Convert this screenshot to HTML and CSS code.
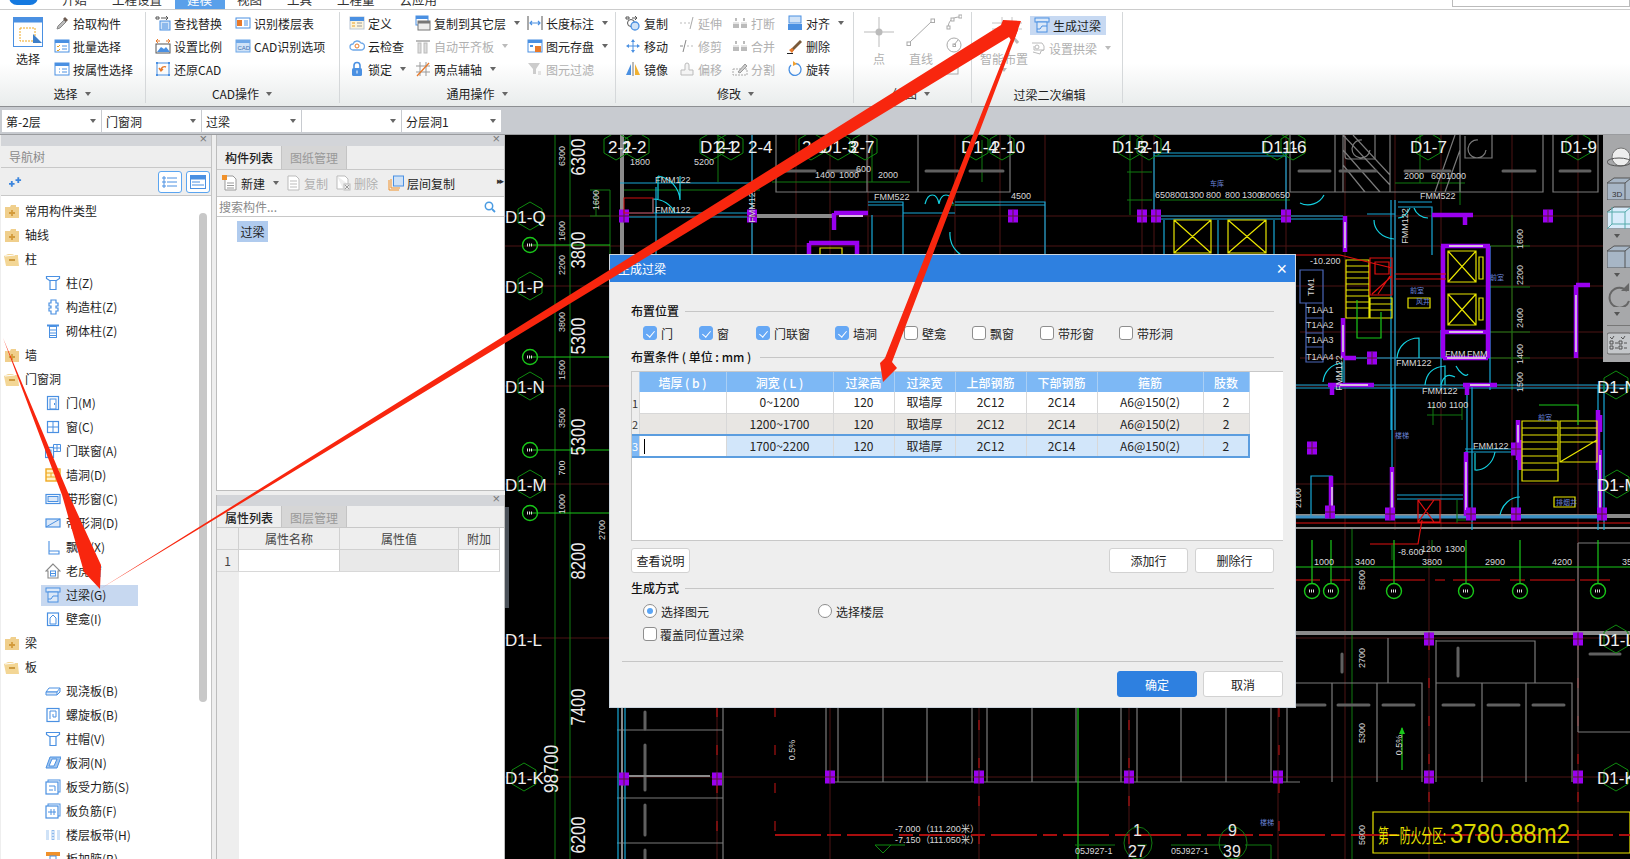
FILE: index.html
```html
<!DOCTYPE html>
<html lang="zh-CN">
<head>
<meta charset="utf-8">
<title>生成过梁</title>
<link rel="stylesheet" href="styles.css">
</head>
<body>
<svg class="sprite" aria-hidden="true">
  <defs>
    <g id="s-pick"><path d="M3 14l1-3 6-6 2 2-6 6z" fill="#bbb" stroke="#888"/><path d="M9 4l2-2 3 3-2 2z" fill="#6b5a50"/></g>
    <g id="s-batch"><rect x="1" y="2" width="14" height="12" fill="#fff" stroke="#4a90e2"/><rect x="1" y="2" width="14" height="3" fill="#4a90e2"/><path d="M3 8l1 1 2-2M3 12l1 1 2-2" stroke="#e8a020" fill="none"/><path d="M8 8h5M8 11h5" stroke="#4a90e2"/></g>
    <g id="s-attr"><rect x="1" y="2" width="14" height="12" fill="#fff" stroke="#4a90e2"/><rect x="1" y="2" width="14" height="3" fill="#4a90e2"/><path d="M8 8h5M8 11h5M5 8h1M5 11h1" stroke="#4a90e2"/></g>
    <g id="s-find"><path d="M1 2h3v2H1zM6 3h7l-2-2m2 2l-2 2" fill="none" stroke="#555"/><rect x="5" y="6" width="10" height="9" fill="#cfe2f7" stroke="#4a90e2"/><path d="M7 9h6M7 11h6M7 13h6" stroke="#4a90e2"/></g>
    <g id="s-floor"><rect x="1" y="3" width="14" height="10" fill="#fff" stroke="#4a90e2"/><rect x="2" y="5" width="5" height="6" fill="#e8792a"/><path d="M9 6h4M9 8h4M9 10h4" stroke="#4a90e2"/></g>
    <g id="s-scale"><path d="M1 3h4M11 3h4M3 1l-2 2 2 2M13 1l2 2-2 2" stroke="#e8792a" fill="none"/><rect x="1" y="6" width="14" height="9" fill="#fff" stroke="#555"/><path d="M2 14l4-5 3 2 2-2 4 5z" fill="#4a90e2"/></g>
    <g id="s-cadopt"><rect x="1" y="2" width="14" height="12" fill="#cfe2f7" stroke="#6fa8e8"/><rect x="1" y="2" width="14" height="3" fill="#6fa8e8"/></g>
    <g id="s-restore"><rect x="2" y="2" width="12" height="12" fill="none" stroke="#4a90e2"/><path d="M1 1h2v2H1zM13 1h2v2h-2zM1 13h2v2H1zM13 13h2v2h-2z" fill="#4a90e2"/><path d="M11 6a3.5 3.5 0 0 0-5 3M4 7l2 3 2-2" fill="none" stroke="#e8792a" stroke-width="1.4"/></g>
    <g id="s-def"><rect x="1" y="2" width="14" height="12" fill="#fbf3dc" stroke="#b9c6d6"/><rect x="1" y="2" width="14" height="4" fill="#4a90e2"/><path d="M3 8h3M3 11h3" stroke="#e8a020"/><path d="M8 8h5M8 11h5" stroke="#999"/></g>
    <g id="s-cloud"><path d="M4 12a3 3 0 0 1 0-6 4.500 4.500 0 0 1 8-1 3.500 3.500 0 0 1 0 7z" fill="#fff" stroke="#6fa8e8" stroke-width="1.3"/><circle cx="8" cy="8" r="2" fill="none" stroke="#e8792a"/></g>
    <g id="s-lock"><rect x="3" y="7" width="10" height="8" rx="1.500" fill="#4a90e2"/><path d="M5 7V4.500a3 3 0 0 1 6 0V7" fill="none" stroke="#4a90e2" stroke-width="1.6"/><rect x="7.500" y="9.500" width="1" height="3" fill="#fff"/></g>
    <g id="s-copyl"><rect x="1" y="1" width="12" height="9" fill="#fff" stroke="#4a90e2"/><rect x="1" y="1" width="12" height="3" fill="#4a90e2"/><rect x="3" y="6" width="12" height="9" fill="#eee" stroke="#777"/><rect x="3" y="6" width="12" height="2.500" fill="#777"/></g>
    <g id="s-flat"><path d="M1 3h14" stroke="#bbb" stroke-width="2"/><rect x="3" y="5" width="3" height="10" fill="#ddd" stroke="#bbb"/><rect x="9" y="5" width="3" height="10" fill="#ddd" stroke="#bbb"/></g>
    <g id="s-axis"><path d="M1 5h14M1 11h14M5 1v14M11 1v14" stroke="#999"/><path d="M2 15L14 2" stroke="#e8792a" stroke-width="1.3"/></g>
    <g id="s-len"><path d="M1 1v14M15 1v14" stroke="#555"/><path d="M3 8h10M5 6L3 8l2 2M11 6l2 2-2 2" stroke="#4a90e2" fill="none" stroke-width="1.2"/></g>
    <g id="s-save"><rect x="1" y="2" width="14" height="12" fill="#fff" stroke="#4a90e2"/><rect x="1" y="2" width="14" height="3" fill="#4a90e2"/><rect x="8" y="8" width="6" height="6" fill="#e8792a"/><rect x="3" y="7" width="3" height="2" fill="#4a90e2"/></g>
    <g id="s-filter"><path d="M1 2h12L9 8v5H6V8z" fill="#ccc"/><path d="M11 11h3M11 13h3" stroke="#ccc"/></g>
    <g id="s-copy"><path d="M1 2h3v2H1z" fill="none" stroke="#555"/><path d="M7 3h5l-2-2m2 2l-2 2" fill="none" stroke="#555"/><circle cx="6" cy="8" r="3.500" fill="none" stroke="#555"/><circle cx="10" cy="11" r="4" fill="#cfe2f7" stroke="#4a90e2" stroke-width="1.300"/></g>
    <g id="s-extend"><path d="M1 8h2M5 8h2M9 8h2" stroke="#bbb"/><path d="M11 14l3-12" stroke="#aaa"/></g>
    <g id="s-break"><path d="M1 8h6M9 8h6" stroke="#ccc"/><rect x="1" y="9" width="6" height="4" fill="#bbb"/><rect x="9" y="9" width="6" height="4" fill="#bbb"/><path d="M4 3v3M12 3v3" stroke="#bbb" stroke-width="2"/></g>
    <g id="s-alignr"><rect x="2" y="1" width="12" height="7" fill="#cfe2f7" stroke="#4a90e2"/><rect x="1" y="9" width="14" height="6" fill="#4a90e2"/></g>
    <g id="s-move"><path d="M8 3v10M3 8h10" stroke="#4a90e2"/><path d="M8 1l2 3H6zM8 15l2-3H6zM1 8l3-2v4zM15 8l-3-2v4z" fill="#4a90e2"/></g>
    <g id="s-trim"><path d="M4 14l3-12" stroke="#888"/><path d="M1 8h3" stroke="#888"/><path d="M8 8h7" stroke="#bbb" stroke-dasharray="2 2"/></g>
    <g id="s-del"><path d="M4 11L13 2l2 2-9 9z" fill="#7a5a3a"/><path d="M2 12l3-2 2 2-2 3z" fill="#e8792a"/><path d="M0 15.500h6" stroke="#222"/></g>
    <g id="s-mirror"><path d="M8 1v14" stroke="#777"/><path d="M6 3v11H1z" fill="#4a90e2"/><path d="M10 3v11h5z" fill="#f0b030"/></g>
    <g id="s-offset"><path d="M6 9V4a2 2 0 0 1 4 0v5h4v5H2V9z" fill="#f4f4f4" stroke="#bbb"/></g>
    <g id="s-split"><rect x="1" y="8" width="14" height="6" fill="none" stroke="#aaa" stroke-dasharray="2 1"/><path d="M6 11l7-8 2 2-7 7z" fill="#ccc" stroke="#999"/></g>
    <g id="s-rotate"><path d="M4 4a6 6 0 1 0 5-1.500" fill="none" stroke="#4a90e2" stroke-width="1.300"/><path d="M6 0v5l4-2z" fill="#f0a030"/></g>
    <g id="s-lintel"><rect x="1" y="1" width="14" height="4" fill="#dbe8f8" stroke="#4a90e2"/><rect x="3" y="5" width="10" height="10" fill="#dbe8f8" stroke="#4a90e2"/><path d="M3 12h3l2-3h5" fill="none" stroke="#4a90e2"/></g>
    <g id="s-vault"><path d="M3 12l7 2 1-3 3-1" stroke="#bbb" fill="none"/><path d="M2 3h10l2 3v4H4V6" fill="none" stroke="#bbb"/><circle cx="7" cy="7" r="2" fill="none" stroke="#bbb"/></g>
    <g id="s-col"><path d="M1.500 1.500h13v2l-3 2h-7l-3-2zM5 5.500h6v9H5z" fill="#fff" stroke="#4a90e2" stroke-width="1.200"/></g>
    <g id="s-cons"><path d="M6 1h5v3h2v3h-2v2h2v3h-2v3H6v-3H4V9h2V7H4V4h2z" fill="#fff" stroke="#4a90e2" stroke-width="1.200"/></g>
    <g id="s-mas"><path d="M2 1.500h12v2H2z" fill="#4a90e2"/><rect x="4.500" y="3.500" width="7" height="11" fill="#fff" stroke="#4a90e2"/><path d="M4.500 7h7M4.500 10h7M4.500 12.500h7" stroke="#4a90e2"/></g>
    <g id="s-door"><rect x="2.500" y="1.500" width="11" height="13" fill="#fff" stroke="#4a90e2" stroke-width="1.200"/><rect x="5" y="4" width="6" height="10" fill="none" stroke="#4a90e2"/><rect x="9" y="8" width="1" height="2" fill="#4a90e2"/></g>
    <g id="s-win"><rect x="2.500" y="2.500" width="11" height="11" fill="#fff" stroke="#4a90e2" stroke-width="1.200"/><path d="M8 2.500v11M2.500 8h11" stroke="#4a90e2"/></g>
    <g id="s-dw"><rect x="0.500" y="4.500" width="8" height="10" fill="#fff" stroke="#4a90e2" stroke-width="1.200"/><rect x="3" y="7" width="3" height="7" fill="none" stroke="#4a90e2"/><path d="M8.500 1.500h7v7h-7zM12 1.500v7M8.500 5h7" fill="none" stroke="#4a90e2"/></g>
    <g id="s-hole"><rect x="1" y="2" width="14" height="12" fill="#fff3c8" stroke="#f0a820" stroke-width="1.400"/><path d="M1 6h14M1 10h10M6 6v4M11 6v8" stroke="#f0a820"/></g>
    <g id="s-band"><rect x="1" y="3.500" width="14" height="9" fill="#fff" stroke="#4a90e2" stroke-width="1.200"/><rect x="3" y="5.500" width="10" height="5" fill="#dbe8f8" stroke="#4a90e2"/></g>
    <g id="s-bandh"><rect x="1" y="4" width="14" height="8" fill="#dbe8f8" stroke="#4a90e2" stroke-width="1.200"/><path d="M1 12L15 4" stroke="#4a90e2"/></g>
    <g id="s-bay"><path d="M4 2v10h10M4 12h10v3H4z" fill="#fff" stroke="#4a90e2" stroke-width="1.100"/></g>
    <g id="s-dormer"><path d="M8 1L1 8h2v7h10V8h2z" fill="#fff" stroke="#888" stroke-width="1.100"/><rect x="5.500" y="8" width="5" height="5" fill="#fff" stroke="#4a90e2"/><path d="M5.500 10.500h5" stroke="#4a90e2"/></g>
    <g id="s-niche"><rect x="2.500" y="2" width="11" height="12.500" fill="#fff" stroke="#4a90e2" stroke-width="1.200"/><path d="M5 13V7l3-3 3 3v6z" fill="none" stroke="#4a90e2"/></g>
    <g id="s-slab"><path d="M4 5h11l-3 4H1z" fill="#fff" stroke="#4a90e2"/><path d="M1 9h11v3H1zM12 12l3-3V5" fill="#dbe8f8" stroke="#4a90e2"/></g>
    <g id="s-spiral"><rect x="2" y="1.500" width="12" height="13" fill="#fff" stroke="#4a90e2" stroke-width="1.200"/><path d="M5 12V4h6v6H8V7" fill="none" stroke="#4a90e2"/></g>
    <g id="s-shole"><path d="M5 2h11l-4 11H1z" fill="#9fc4ee" stroke="#4a90e2"/><path d="M7 4h5l-3 7H4z" fill="#fff" stroke="#4a90e2"/></g>
    <g id="s-bar"><rect x="3" y="1" width="12" height="12" fill="#fff" stroke="#4a90e2"/><rect x="1" y="3" width="12" height="12" fill="#fff" stroke="#4a90e2" stroke-width="1.200"/><path d="M4 7h6v5M4 11h4" fill="none" stroke="#4a90e2"/></g>
    <g id="s-neg"><rect x="3" y="1" width="12" height="12" fill="#fff" stroke="#4a90e2"/><rect x="1" y="3" width="12" height="12" fill="#fff" stroke="#4a90e2" stroke-width="1.200"/><path d="M3 9h8M6 6v6M9 6v6" fill="none" stroke="#4a90e2"/></g>
    <g id="s-strip"><rect x="1" y="3" width="14" height="10" fill="#cfe2f7"/><path d="M5 3v10M11 3v10" stroke="#fff" stroke-width="2"/><path d="M8 3v10" stroke="#4a90e2" stroke-dasharray="1 2"/></g>
    <g id="s-haunch"><path d="M1 1h14v4H1z" fill="#f0912a"/><rect x="5" y="5" width="6" height="10" fill="#fff" stroke="#4a90e2"/></g>
    <g id="f-plus"><path d="M1 4h5l1-2h5v2h3v11H1z" fill="#f0cf8c"/><path d="M5 10h6M8 7v6" stroke="#d39b3c" stroke-width="1.800"/></g>
    <g id="f-minus"><path d="M0 5l4-2h6l-1 1h5v2l1 9H2z" fill="#f3d695"/><path d="M1 5l10-1" stroke="#fff"/><path d="M5 9h6" stroke="#c99336" stroke-width="1.800"/></g>
    <g id="ps"><rect x="-5" y="-6.500" width="10" height="13" fill="#9a00f0"/><path d="M-5 0H5M0-6.500V6.500" stroke="#5a1a30"/></g>
    <path id="hex" d="M0-14L12-7V7L0 14-12 7V-7z" fill="none" stroke="#0f8a0f"/>
    <g id="axc"><circle r="7.500" fill="none" stroke="#19c719" stroke-width="1.400"/><path d="M-3 0h6" stroke="#ddd" stroke-width="3" stroke-dasharray="1 1"/></g>
  </defs>
</svg>

<div class="app">
  <header class="tabs">
    <div class="logo"></div>
    <div class="tab">开始</div>
    <div class="tab">工程设置</div>
    <div class="tab active">建模</div>
    <div class="tab">视图</div>
    <div class="tab">工具</div>
    <div class="tab">工程量</div>
    <div class="tab">云应用</div>
    <div class="quick"></div>
  </header>

  <section class="ribbon">
    <div class="group g1">
      <div class="cols">
        <div class="big bigsel">
          <svg class="i-big" viewBox="0 0 30 30"><rect x=".5" y=".5" width="29" height="29" fill="#fff" stroke="#4a90e2"/><rect x=".5" y=".5" width="29" height="5" fill="#4a90e2"/><rect x="7" y="11" width="15" height="13" fill="none" stroke="#f0a820" stroke-dasharray="2 1"/><path d="M20 17l9 9H20z" fill="#3f7fc8"/></svg>
          <span>选择</span>
        </div>
        <div class="col c-g1">
          <div class="it"><svg class="i"><use href="#s-pick"/></svg>拾取构件</div>
          <div class="it"><svg class="i"><use href="#s-batch"/></svg>批量选择</div>
          <div class="it"><svg class="i"><use href="#s-attr"/></svg>按属性选择</div>
        </div>
      </div>
      <div class="glabel lb1">选择<i class="caret"></i></div>
    </div>

    <div class="group g2">
      <div class="cols">
        <div class="col w80">
          <div class="it"><svg class="i"><use href="#s-find"/></svg>查找替换</div>
          <div class="it"><svg class="i"><use href="#s-scale"/></svg>设置比例</div>
          <div class="it"><svg class="i"><use href="#s-restore"/></svg>还原CAD</div>
        </div>
        <div class="col">
          <div class="it"><svg class="i"><use href="#s-floor"/></svg>识别楼层表</div>
          <div class="it"><svg class="i" viewBox="0 0 16 16"><use href="#s-cadopt"/><text x="2.500" y="12" class="cadt">CAD</text></svg>CAD识别选项</div>
        </div>
      </div>
      <div class="glabel">CAD操作<i class="caret"></i></div>
    </div>

    <div class="group g3">
      <div class="cols">
        <div class="col w66">
          <div class="it"><svg class="i"><use href="#s-def"/></svg>定义</div>
          <div class="it"><svg class="i"><use href="#s-cloud"/></svg>云检查</div>
          <div class="it"><svg class="i"><use href="#s-lock"/></svg>锁定<i class="caret"></i></div>
        </div>
        <div class="col w112">
          <div class="it"><svg class="i"><use href="#s-copyl"/></svg>复制到其它层<i class="caret"></i></div>
          <div class="it off"><svg class="i"><use href="#s-flat"/></svg>自动平齐板<i class="caret"></i></div>
          <div class="it"><svg class="i"><use href="#s-axis"/></svg>两点辅轴<i class="caret"></i></div>
        </div>
        <div class="col">
          <div class="it"><svg class="i"><use href="#s-len"/></svg>长度标注<i class="caret"></i></div>
          <div class="it"><svg class="i"><use href="#s-save"/></svg>图元存盘<i class="caret"></i></div>
          <div class="it off"><svg class="i"><use href="#s-filter"/></svg>图元过滤</div>
        </div>
      </div>
      <div class="glabel">通用操作<i class="caret"></i></div>
    </div>

    <div class="group g4">
      <div class="cols">
        <div class="col w54">
          <div class="it"><svg class="i"><use href="#s-copy"/></svg>复制</div>
          <div class="it"><svg class="i"><use href="#s-move"/></svg>移动</div>
          <div class="it"><svg class="i"><use href="#s-mirror"/></svg>镜像</div>
        </div>
        <div class="col w53">
          <div class="it off"><svg class="i"><use href="#s-extend"/></svg>延伸</div>
          <div class="it off"><svg class="i"><use href="#s-trim"/></svg>修剪</div>
          <div class="it off"><svg class="i"><use href="#s-offset"/></svg>偏移</div>
        </div>
        <div class="col w55">
          <div class="it off"><svg class="i"><use href="#s-break"/></svg>打断</div>
          <div class="it off"><svg class="i"><use href="#s-break"/></svg>合并</div>
          <div class="it off"><svg class="i"><use href="#s-split"/></svg>分割</div>
        </div>
        <div class="col">
          <div class="it"><svg class="i"><use href="#s-alignr"/></svg>对齐<i class="caret"></i></div>
          <div class="it"><svg class="i"><use href="#s-del"/></svg>删除</div>
          <div class="it"><svg class="i"><use href="#s-rotate"/></svg>旋转</div>
        </div>
      </div>
      <div class="glabel">修改<i class="caret"></i></div>
    </div>

    <div class="group g5">
      <div class="cols">
        <div class="big off w42">
          <svg class="i-big" viewBox="0 0 30 30"><path d="M15 0v30M0 15h30" stroke="#bbb"/><circle cx="15" cy="15" r="3.500" fill="#bbb"/></svg>
          <span>点</span>
        </div>
        <div class="big off w40">
          <svg class="i-big" viewBox="0 0 30 30"><rect x="1" y="25" width="3.500" height="3.500" fill="none" stroke="#aaa"/><rect x="25" y="2" width="3.500" height="3.500" fill="none" stroke="#aaa"/><path d="M4 25L25 5" stroke="#aaa"/></svg>
          <span>直线</span>
        </div>
        <div class="mini">
          <svg class="i" viewBox="0 0 16 16"><path d="M2 15c0-8 4-12 12-12" fill="none" stroke="#aaa"/><rect x="1" y="12" width="3" height="3" fill="#fff" stroke="#aaa"/><rect x="5" y="4" width="3" height="3" fill="#fff" stroke="#aaa"/><rect x="13" y="1" width="3" height="3" fill="#fff" stroke="#aaa"/></svg>
          <svg class="i" viewBox="0 0 16 16"><circle cx="8" cy="8" r="7" fill="none" stroke="#aaa"/><rect x="7" y="7" width="2.500" height="2.500" fill="none" stroke="#aaa"/><path d="M8 8l4-5" stroke="#aaa"/></svg>
          <svg class="i" viewBox="0 0 16 16"><rect x="1" y="5" width="11" height="9" fill="none" stroke="#aaa"/><rect x="10" y="1" width="4" height="4" fill="#fff" stroke="#aaa"/></svg>
        </div>
      </div>
      <div class="glabel">绘图<i class="caret"></i></div>
    </div>

    <div class="group g6">
      <div class="cols">
        <div class="big off w52">
          <svg class="i-big" viewBox="0 0 30 30"><path d="M0 12h30M0 6h30M10 0v22M20 0v22" stroke="#c4c4c4"/><path d="M14 12l12 14" stroke="#bbb" stroke-width="3"/></svg>
          <span>智能布置</span>
          <i class="caret"></i>
        </div>
        <div class="col">
          <div class="it hi"><svg class="i"><use href="#s-lintel"/></svg>生成过梁</div>
          <div class="it off"><svg class="i"><use href="#s-vault"/></svg>设置拱梁<i class="caret"></i></div>
        </div>
      </div>
      <div class="glabel nocaret">过梁二次编辑</div>
    </div>
  </section>

  <section class="combos">
    <div class="combo">第-2层<i class="caret"></i></div>
    <div class="combo">门窗洞<i class="caret"></i></div>
    <div class="combo">过梁<i class="caret"></i></div>
    <div class="combo"><i class="caret"></i></div>
    <div class="combo">分层洞1<i class="caret"></i></div>
  </section>

  <main class="work">
    <aside class="nav">
      <div class="strip"><span class="x">×</span></div>
      <div class="navtitle">导航树</div>
      <div class="navtools">
        <svg class="pin" viewBox="0 0 14 10"><path d="M0 7h6M3 4v6" stroke="#3d86dd" stroke-width="2"/><path d="M7 3h6M10 0v6" stroke="#3d86dd" stroke-width="2"/></svg>
        <span class="tbtn"><svg viewBox="0 0 16 14"><path d="M1 2h2v2H1zM1 6h2v2H1zM1 10h2v2H1z" fill="none" stroke="#4a90e2"/><path d="M5 3h10M5 7h10M5 11h10" stroke="#4a90e2"/></svg></span>
        <span class="tbtn"><svg viewBox="0 0 16 14"><rect x=".5" y=".5" width="15" height="13" fill="#fff" stroke="#4a90e2"/><rect x=".5" y=".5" width="15" height="4" fill="#4a90e2"/><path d="M2 7h8M2 10h12" stroke="#4a90e2"/></svg></span>
      </div>
      <div class="tree">
        <div class="thumb"></div>
        <div class="n"><svg class="i"><use href="#f-plus"/></svg>常用构件类型</div>
        <div class="n"><svg class="i"><use href="#f-plus"/></svg>轴线</div>
        <div class="n"><svg class="i"><use href="#f-minus"/></svg>柱</div>
        <div class="n s"><svg class="i"><use href="#s-col"/></svg>柱(Z)</div>
        <div class="n s"><svg class="i"><use href="#s-cons"/></svg>构造柱(Z)</div>
        <div class="n s"><svg class="i"><use href="#s-mas"/></svg>砌体柱(Z)</div>
        <div class="n"><svg class="i"><use href="#f-plus"/></svg>墙</div>
        <div class="n"><svg class="i"><use href="#f-minus"/></svg>门窗洞</div>
        <div class="n s"><svg class="i"><use href="#s-door"/></svg>门(M)</div>
        <div class="n s"><svg class="i"><use href="#s-win"/></svg>窗(C)</div>
        <div class="n s"><svg class="i"><use href="#s-dw"/></svg>门联窗(A)</div>
        <div class="n s"><svg class="i"><use href="#s-hole"/></svg>墙洞(D)</div>
        <div class="n s"><svg class="i"><use href="#s-band"/></svg>带形窗(C)</div>
        <div class="n s"><svg class="i"><use href="#s-bandh"/></svg>带形洞(D)</div>
        <div class="n s"><svg class="i"><use href="#s-bay"/></svg>飘窗(X)</div>
        <div class="n s"><svg class="i"><use href="#s-dormer"/></svg>老虎窗</div>
        <div class="n s sel"><svg class="i"><use href="#s-lintel"/></svg>过梁(G)</div>
        <div class="n s"><svg class="i"><use href="#s-niche"/></svg>壁龛(I)</div>
        <div class="n"><svg class="i"><use href="#f-plus"/></svg>梁</div>
        <div class="n"><svg class="i"><use href="#f-minus"/></svg>板</div>
        <div class="n s"><svg class="i"><use href="#s-slab"/></svg>现浇板(B)</div>
        <div class="n s"><svg class="i"><use href="#s-spiral"/></svg>螺旋板(B)</div>
        <div class="n s"><svg class="i"><use href="#s-col"/></svg>柱帽(V)</div>
        <div class="n s"><svg class="i"><use href="#s-shole"/></svg>板洞(N)</div>
        <div class="n s"><svg class="i"><use href="#s-bar"/></svg>板受力筋(S)</div>
        <div class="n s"><svg class="i"><use href="#s-neg"/></svg>板负筋(F)</div>
        <div class="n s"><svg class="i"><use href="#s-strip"/></svg>楼层板带(H)</div>
        <div class="n s"><svg class="i"><use href="#s-haunch"/></svg>板加腋(B)</div>
      </div>
    </aside>

    <div class="mid">
      <div class="pane top">
        <div class="strip"><span class="x">×</span></div>
        <div class="ptabs"><span class="ptab on">构件列表</span><span class="ptab">图纸管理</span></div>
        <div class="ptools">
          <span class="pt pt1"><svg class="i" viewBox="0 0 16 16"><path d="M3 1h8l3 3v11H3z" fill="#fff" stroke="#999"/><path d="M5 8h7M5 10.500h7M5 13h7" stroke="#999"/><rect width="5" height="5" fill="#f0912a"/></svg>新建<i class="caret"></i></span>
          <span class="pt off pt2"><svg class="i" viewBox="0 0 16 16"><path d="M3 1h8l3 3v11H3z" fill="#fff" stroke="#bbb"/><path d="M5 6h7M5 9h7M5 12h7" stroke="#bbb"/></svg>复制</span>
          <span class="pt off pt3"><svg class="i" viewBox="0 0 16 16"><path d="M2 1h8l3 3v5M2 1v13h6" fill="#fff" stroke="#bbb"/><rect x="9" y="9" width="6" height="6" fill="#eee" stroke="#bbb"/><path d="M10 10l4 4M14 10l-4 4" stroke="#999"/></svg>删除</span>
          <span class="pt pt4"><svg class="i" viewBox="0 0 16 16"><path d="M1 5v10h10" fill="none" stroke="#f0912a"/><path d="M3 4v9h9" fill="none" stroke="#f0912a"/><rect x="5.500" y="1" width="10" height="10" fill="#cfe2f7" stroke="#4a90e2"/></svg>层间复制</span>
          <span class="more">▸▸</span>
        </div>
        <div class="search">搜索构件...<svg class="sico" viewBox="0 0 12 12"><circle cx="5" cy="5" r="3.700" fill="none" stroke="#4a9be2" stroke-width="1.500"/><path d="M8 8l3 3" stroke="#4a9be2" stroke-width="1.800"/></svg></div>
        <div class="plist"><span class="pitem">过梁</span></div>
      </div>
      <div class="pane bottom">
        <div class="strip"><span class="x">×</span></div>
        <div class="ptabs"><span class="ptab on">属性列表</span><span class="ptab">图层管理</span></div>
        <div class="pgrid">
          <div class="pg-h">
            <span class="c0"></span><span class="c1">属性名称</span><span class="c2">属性值</span><span class="c3">附加</span>
          </div>
          <div class="pg-r">
            <span class="c0">1</span><span class="c1"></span><span class="c2"></span><span class="c3"></span>
          </div>
        </div>
      </div>
      <div class="splitter"></div>
    </div>

    <div class="canvas">
      <svg class="cad" viewBox="505 135 1125 724">
        <!-- dark red axes -->
        <path class="rd" d="M505 216H1630M505 246H1630M505 286H1630M505 386H1630M505 484H1630M505 638H1630M505 777H1630M1300 332H1630M1300 358H1630M622 135V859M752 135V255M796 135V255M830 135V255M868 135V255M955 135V255M1000 135V255M1045 135V255M1142 135V255M1154 135V255M1286 135V255M1345 135V859M1395 135V530M1441 135V530M1512 135V530M1578 135V859M717 707V859M830 707V859M979 707V859M1129 707V859M1278 707V859M1429 540V859"/>
        <path class="rdash" d="M775 707V859M1279 707V859M1429 640V859M1578 640V859M622 707V859M717 707V859M979 720V859M1129 720V859"/>
        <!-- green dims -->
        <path class="gd" d="M555 135V859M570 135V859M590 190H610M590 216H610M596 190V216M610 190V255M622 190H760M718 135V182M772 182H910M872 182V140M950 205H1000M982 182V140M1127 172H1152M1127 200H1152M1130 135V215M1160 200H1290M1512 215V390M1490 246H1530M1490 287H1530M1490 332H1530M1490 358H1530M1352 528V859M1395 183H1465M1460 183V205M1420 183V135M1427 415H1462M1433 405V425M1462 405V420"/>
        <path class="bg" d="M530 245H610M530 357H610M530 450H610M530 513H610"/>
        <!-- parking -->
        <path class="gw" d="M776 135V192H1010V135M867 135V192M918 135V192M1290 135V192H1543V135M1335 135V192M1390 135V192M1460 135V192M1553 135V192H1598V135M1295 683H1422V782M1332 683V782M1377 683V782M1436 683H1572V782M1482 683V782M1526 683V782M1436 640V782M1388 638V683M1436 641H1535V683M1578 543H1630M1578 732H1630M1578 543V732M723 707V859M617 730H723M617 798H723M617 843H723M826 707V782H1300M838 707V782M883 707V782M927 707V782M972 707V782M987 707V782M1032 707V782M1076 707V782M1121 707V782M1137 707V782M1181 707V782M1226 707V782M1271 707V782M1287 707V782M1343 135L1390 185M1353 135L1390 175M1343 150L1380 192M1343 165L1365 192M1435 192L1455 135M1445 192L1460 150M1343 135V192"/>
        <path class="gw" d="M1343 135h2M1345 136v20a3 3 0 0 0 3 3h27v-24M1465 136v22h27v-23M1362 140a9 9 0 1 0 8 10M1478 140a9 9 0 1 0 8 10"/>
        <path class="bar" d="M783 171H815M828 171H860M926 171H958M970 171H1003M1299 171H1330M1340 171H1376M1405 171H1450M1503 171H1535M1560 171H1590M1295 705H1325M1338 705H1369M1383 705H1414M1443 705H1474M1488 705H1519M1533 705H1564M1342 654V672M1458 648V676M1590 654H1620M645 712V729M645 745V790M645 805V835M645 850V859"/>
        <path class="gwthick" d="M622 135V255M752 216H834M1295 633H1630M1295 516H1630"/>
        <path class="gwthin" d="M1295 528H1630M622 707V859M710 776H625"/>
        <!-- cyan -->
        <path class="cy" d="M620 183H752V135M622 213H752M622 217H752M752 135V255M656 187V255M872 215V255M868 202H903V255M868 205H903M955 202H1045V255M955 205H1045M903 213H955M1154 153V216H1286V153zM1154 156H1286M1154 216H1343M1154 219H1343M1164 220V255M1218 220V255M1274 220V255M1367 214H1395M1395 200V430M1391 200V430M1398 202H1432M1398 207H1432V255M1441 246H1490M1441 330V390M1490 246V390M1295 385H1630M1295 388H1630M1347 358H1490M1344 385V358M1598 385V530M1604 385V530M1467 385V460M1472 385V530M1311 476H1332V517H1311zM1397 495H1463M1397 499H1463M1392 388V516M1465 449H1518M1465 452H1518M1518 452V516M1518 516H1598M625 707V859M618 707V859"/>
        <path class="cyt" d="M1295 517H1598"/>
        <path class="arc" d="M658 176a26 26 0 0 1 22 24V176M658 200V176M653 213V199a24 24 0 0 1 22 14M1300 203a18 18 0 0 0 24-8M925 204c3-12 12-12 14 0 2-12 12-12 14 0M950 232a25 25 0 0 0 27 27M1374 220c0 10 8 18 20 19M1397 358c1-12 10-20 22-20V358M1425 385c1-11 8-18 20-19V385M1323 382c1-10 8-18 19-19V382M1475 453v17c8 1 18-6 20-18M1500 515c2-10 10-18 20-18M1398 218c6 0 10-6 12-10M1414 208c2 6 8 10 14 10M1441 385c2-8 6-12 14-8M1456 366c3 6 10 12 12 8"/>
        <!-- purple walls -->
        <path class="pu" d="M834 213H868M834 213V230M809 243H857V255M809 243V255M1345 216V252M1343 318V358M1441 246H1490M1344 358H1356M1473 215H1432M1465 215V225M1443 246V358M1488 246V358M1443 332H1488M1443 358H1488M1328 385H1374M1463 385H1497M1332 385V395M1467 385V395M1518 420V460M1576 285H1590M1576 285V358M1598 410V470M1520 440V470M1392 467V516M1466 452V516M1600 450V516M1600 415V432M1331 476V516"/>
        <path class="pul" d="M839 216H863M1345 222V248M1343 325V352M1449 246H1483M1449 332H1483M1447 358H1486M1576 295V352M1470 385H1490M1392 472V510M1466 462V510M1600 455V510M1518 425V455M1332 487V510M1340 385H1368"/>
        <use href="#ps" x="624" y="216"/><use href="#ps" x="752" y="216"/><use href="#ps" x="1013" y="216"/><use href="#ps" x="1142" y="216"/><use href="#ps" x="1156" y="216"/><use href="#ps" x="1286" y="216"/><use href="#ps" x="1548" y="216"/>
        <use href="#ps" x="1312" y="448"/><use href="#ps" x="1330" y="512"/><use href="#ps" x="1390" y="514"/><use href="#ps" x="1471" y="514"/><use href="#ps" x="1516" y="514"/><use href="#ps" x="1602" y="514"/><use href="#ps" x="1516" y="449"/><use href="#ps" x="1429" y="639"/><use href="#ps" x="1578" y="639"/>
        <use href="#ps" x="624" y="779"/><use href="#ps" x="717" y="779"/><use href="#ps" x="830" y="777"/><use href="#ps" x="979" y="777"/><use href="#ps" x="1129" y="777"/><use href="#ps" x="1278" y="777"/><use href="#ps" x="1429" y="777"/><use href="#ps" x="1578" y="777"/><use href="#ps" x="1372" y="358"/>
        <!-- yellow -->
        <path class="ye" d="M1174 220h37v33h-37zM1174 220l37 33M1211 220l-37 33M1228 220h38v33h-38zM1228 220l38 33M1266 220l-38 33M1448 251h28v31h-28zM1448 251l28 31M1476 251l-28 31M1448 294h28v31h-28zM1448 294l28 31M1476 294l-28 31M1479 257h4v22h-4zM1479 298h4v22h-4zM1346 260h23v58h-23zM1346 266h23M1346 272h23M1346 278h23M1346 284h23M1346 290h23M1346 296h23M1346 302h23M1346 308h23M1370 298h22v20h-22zM1370 304h22M1370 310h22M1408 298h22v10h-22zM1554 497h21v10h-21zM1373 812h257v41h-257zM1522 421h36v60h-36zM1522 428h36M1522 435h36M1522 442h36M1522 449h36M1522 456h36M1522 463h36M1522 470h36M1560 421h37v41h-37zM1560 428h37M1560 435h37M1560 442h37M1597 440l-37 22M820 248h22v7h-22z"/>
        <!-- red -->
        <path class="re" d="M1285 255H1340L1392 268M1370 258h22v37h-22zM1375 262h14v12h-14zM1372 294l20-18M1378 294l12-18M1395 274H1446M1395 279H1446M1295 523H1630M1295 580h25M1330 580h20M1380 580h45M1435 580h10M1453 580h47M1510 580h15M1530 580h45M1580 580h30M1418 500h22v22h-22zM1418 500l16 22M1434 500l-16 22M1370 544h48L1422 520"/>
        <rect class="pf" x="624" y="198" width="29" height="15"/>
        <path class="re2" d="M775 835H1630"/>
        <path class="be" d="M1300 270h23v33h-23zM1306 303h17v59h-17zM1306 318h17M1306 333h17M1306 347h17"/>
        <!-- green inner -->
        <path class="lg" d="M1357 300V338H1381V312M1312 540V583M1331 540V583M1394 540V583M1466 540V583M1520 540V583M1598 540V583M1295 567H1630M1402 770V728M1539 405H1578V425M1078 707V859"/>
        <path class="ar" d="M1402 727l-3 7h6z"/>
        <path class="lgd" d="M1075 845h40M1137 845h10M1171 845h55M1245 845h26v14M1392 545V560M1432 540V552M1457 500V523M1466 520H1457"/>
        <use href="#axc" x="1312" y="591"/><use href="#axc" x="1331" y="591"/><use href="#axc" x="1394" y="591"/><use href="#axc" x="1466" y="591"/><use href="#axc" x="1520" y="591"/><use href="#axc" x="1598" y="591"/><use href="#axc" x="530" y="245"/><use href="#axc" x="530" y="357"/><use href="#axc" x="530" y="450"/><use href="#axc" x="530" y="513"/>
        <path class="gd" d="M1124 843a14 16 0 1 0 28 0a14 16 0 1 0-28 0M1219 843a14 16 0 1 0 28 0a14 16 0 1 0-28 0"/>
        <path class="wl" d="M875 845h30M875 845l8 8 8-8"/>
        <!-- hexagons -->
        <use href="#hex" x="616" y="146"/><use href="#hex" x="637" y="146"/><use href="#hex" x="712" y="146"/><use href="#hex" x="731" y="146"/><use href="#hex" x="811" y="146"/><use href="#hex" x="838" y="146"/><use href="#hex" x="865" y="146"/><use href="#hex" x="976" y="146"/><use href="#hex" x="1002" y="146"/><use href="#hex" x="1130" y="146"/><use href="#hex" x="1149" y="146"/><use href="#hex" x="1277" y="146"/><use href="#hex" x="1293" y="146"/><use href="#hex" x="1428" y="146"/><use href="#hex" x="1578" y="146"/><use href="#hex" x="530" y="216"/><use href="#hex" x="530" y="286"/><use href="#hex" x="530" y="386"/><use href="#hex" x="530" y="484"/><use href="#hex" x="524" y="777"/><use href="#hex" x="1616" y="385"/><use href="#hex" x="1617" y="484"/><use href="#hex" x="1616" y="639"/><use href="#hex" x="1616" y="777"/>
        <!-- big labels -->
        <g class="tl">
          <text x="608" y="153">2-1</text><text x="622" y="153">2-2</text><text x="700" y="153">D1-1</text><text x="716" y="153">2-2</text><text x="748" y="153">2-4</text><text x="802" y="153">2-5</text><text x="820" y="153">D1-3</text><text x="850" y="153">2-7</text><text x="961" y="153">D1-4</text><text x="991" y="153">2-10</text><text x="1112" y="153">D1-2</text><text x="1137" y="153">5-14</text><text x="1261" y="153">D1-1</text><text x="1282" y="153">1-6</text><text x="1410" y="153">D1-7</text><text x="1560" y="153">D1-9</text>
          <text x="505" y="223">D1-Q</text><text x="505" y="293">D1-P</text><text x="505" y="393">D1-N</text><text x="505" y="491">D1-M</text><text x="505" y="646">D1-L</text><text x="505" y="784">D1-K</text><text x="1597" y="393">D1-N</text><text x="1597" y="491">D1-M</text><text x="1598" y="646">D1-L</text><text x="1597" y="784">D1-K</text>
        </g>
        <g class="tv">
          <text transform="translate(585 157) rotate(-90)" textLength="37" lengthAdjust="spacingAndGlyphs">6300</text>
          <text transform="translate(585 250) rotate(-90)" textLength="37" lengthAdjust="spacingAndGlyphs">3800</text>
          <text transform="translate(585 336) rotate(-90)" textLength="37" lengthAdjust="spacingAndGlyphs">5300</text>
          <text transform="translate(585 437) rotate(-90)" textLength="37" lengthAdjust="spacingAndGlyphs">5300</text>
          <text transform="translate(585 561) rotate(-90)" textLength="37" lengthAdjust="spacingAndGlyphs">8200</text>
          <text transform="translate(585 707) rotate(-90)" textLength="37" lengthAdjust="spacingAndGlyphs">7400</text>
          <text transform="translate(558 769) rotate(-90)" textLength="48" lengthAdjust="spacingAndGlyphs">98700</text>
          <text transform="translate(585 835) rotate(-90)" textLength="37" lengthAdjust="spacingAndGlyphs">6200</text>
        </g>
        <g class="ts">
          <text transform="translate(565 156) rotate(-90)">6300</text><text transform="translate(599 200) rotate(-90)">1600</text><text transform="translate(565 231) rotate(-90)">1600</text><text transform="translate(565 265) rotate(-90)">2200</text><text transform="translate(565 322) rotate(-90)">3800</text><text transform="translate(565 370) rotate(-90)">1500</text><text transform="translate(565 418) rotate(-90)">3500</text><text transform="translate(565 468) rotate(-90)">700</text><text transform="translate(565 504) rotate(-90)">1000</text><text transform="translate(605 530) rotate(-90)">2700</text>
          <text x="630" y="165">1800</text><text x="694" y="165">5200</text><text x="815" y="178">1400</text><text x="839" y="178">1000</text><text x="856" y="172">600</text><text x="878" y="178">2000</text><text x="1011" y="199">4500</text>
          <text x="1155" y="198">650800</text><text x="1184" y="198">1300</text><text x="1206" y="198">800</text><text x="1225" y="198">800</text><text x="1242" y="198">1300</text><text x="1260" y="198">800650</text>
          <text x="1404" y="179">2000</text><text x="1431" y="179">6001000</text>
          <text transform="translate(1523 239) rotate(-90)">1600</text><text transform="translate(1523 275) rotate(-90)">2200</text><text transform="translate(1523 318) rotate(-90)">2400</text><text transform="translate(1523 354) rotate(-90)">1400</text><text transform="translate(1523 382) rotate(-90)">1500</text>
          <text x="1427" y="408">1100</text><text x="1449" y="408">1100</text>
          <text x="1314" y="565">1000</text><text x="1355" y="565">3400</text><text x="1422" y="565">3800</text><text x="1485" y="565">2900</text><text x="1552" y="565">4200</text><text x="1622" y="565">35</text>
          <text x="1421" y="552">1200</text><text x="1445" y="552">1300</text>
          <text x="1398" y="555">-8.600</text>
          <text transform="translate(1365 580) rotate(-90)">5600</text><text transform="translate(1365 658) rotate(-90)">2700</text><text transform="translate(1365 733) rotate(-90)">5300</text><text transform="translate(1365 835) rotate(-90)">5600</text><text transform="translate(1301 498) rotate(-90)">2100</text>
          <text transform="translate(1402 745) rotate(-90)">0.5%</text><text transform="translate(795 750) rotate(-90)">0.5%</text>
          <text x="895" y="832">-7.000（111.200米）</text><text x="895" y="843">-7.150（111.050米）</text>
          <text x="1075" y="854">05J927-1</text><text x="1171" y="854">05J927-1</text><text x="1310" y="264">-10.200</text>
          <text x="1473" y="449">FMM122</text><text x="1396" y="366">FMM122</text><text x="1420" y="199">FMM522</text><text x="1422" y="394">FMM122</text>
          <text x="655" y="183">FMM122</text><text x="655" y="213">FMM122</text><text x="874" y="200">FMM522</text>
          <text x="1306" y="313">T1AA1</text><text x="1306" y="328">T1AA2</text><text x="1306" y="343">T1AA3</text><text x="1306" y="360">T1AA4</text>
          <text transform="translate(1314 287) rotate(-90)">TM1</text>
          <text transform="translate(1408 226) rotate(-90)">FMM122</text><text transform="translate(1342 373) rotate(-90)">FMM122</text><text transform="translate(755 205) rotate(-90)">FMM122</text><text transform="translate(1045 260) rotate(-90)"></text>
          <text x="1445" y="357">FMM</text><text x="1467" y="357">FMM</text>
        </g>
        <g class="tb">
          <text x="1210" y="186">车库</text><text x="1410" y="293">前室</text><text x="1395" y="438">楼梯</text><text x="1416" y="304">风井</text><text x="1556" y="505">排烟井</text><text x="1260" y="825">楼梯</text><text x="1538" y="420">前室</text><text x="1490" y="280">前室</text>
        </g>
        <g class="tm">
          <text x="1133" y="836">1</text><text x="1128" y="857">27</text><text x="1228" y="836">9</text><text x="1223" y="857">39</text>
        </g>
        <text class="fire" x="1378" y="843" textLength="68" lengthAdjust="spacingAndGlyphs">第一防火分区:</text>
        <text class="firen" x="1450" y="843" textLength="120" lengthAdjust="spacingAndGlyphs">3780.88m2</text>
      </svg>
      <div class="rail">
        <svg class="ri" viewBox="0 0 24 24"><circle cx="14" cy="10" r="9" fill="#eee" stroke="#777"/><ellipse cx="12" cy="15" rx="12" ry="4" fill="none" stroke="#555"/></svg>
        <svg class="ri" viewBox="0 0 24 24"><path d="M0 7l7-5h17v22H0z" fill="#a7b6c6" stroke="#555"/><path d="M0 7h18l6-5M18 7v17" fill="none" stroke="#555"/><text x="5" y="21" class="rt">3D</text></svg>
        <svg class="ri" viewBox="0 0 24 24"><path d="M0 7l7-5h17v22H0z" fill="#d8ecfb" stroke="#555"/><path d="M0 7h18l6-5M18 7v17M5 2v17h19M0 24l5-5" fill="none" stroke="#5aa"/></svg>
        <i class="caret rc"></i>
        <svg class="ri" viewBox="0 0 24 24"><path d="M0 7l7-5h17v22H0z" fill="#a7b6c6" stroke="#555"/><path d="M0 7h18l6-5M18 7v17" fill="none" stroke="#555"/></svg>
        <i class="caret rc"></i>
        <svg class="ri" viewBox="0 0 24 24"><path d="M20 8A10 10 0 1 0 22 18" fill="none" stroke="#666" stroke-width="2"/><path d="M14 8h8V0z" fill="#666"/></svg>
        <i class="caret rc"></i>
        <div class="rsep"></div>
        <svg class="ri" viewBox="0 0 24 24"><rect y="2" width="24" height="21" rx="2" fill="#c4c7ca" stroke="#666"/><path d="M3 10h3v3H3zM3 15h3v3H3zM12 10h3v3h-3zM12 15h3v3h-3zM8 12h3M8 17h3M17 12h3M17 17h3M3 6l2 2 2-3M14 6l2 2 2-3" fill="none" stroke="#555"/></svg>
      </div>
    </div>
  </main>

  <section class="dialog">
    <div class="dtitle"><span>生成过梁</span><b class="dclose">×</b></div>
    <div class="dbody">
      <div class="sec">布置位置</div>
      <div class="checks">
        <label class="chk"><i class="cb on"></i>门</label>
        <label class="chk"><i class="cb on"></i>窗</label>
        <label class="chk"><i class="cb on"></i>门联窗</label>
        <label class="chk"><i class="cb on"></i>墙洞</label>
        <label class="chk"><i class="cb"></i>壁龛</label>
        <label class="chk"><i class="cb"></i>飘窗</label>
        <label class="chk"><i class="cb"></i>带形窗</label>
        <label class="chk"><i class="cb"></i>带形洞</label>
      </div>
      <div class="sec sec2">布置条件 ( 单位 : mm )</div>
      <div class="gridbox">
        <table class="gridt">
          <colgroup><col class="k0"><col class="k1"><col class="k2"><col class="k3"><col class="k3"><col class="k4"><col class="k4"><col class="k5"><col class="k6"></colgroup>
          <thead><tr><th class="corner"></th><th>墙厚 ( b )</th><th>洞宽 ( L )</th><th>过梁高</th><th>过梁宽</th><th>上部钢筋</th><th>下部钢筋</th><th>箍筋</th><th>肢数</th></tr></thead>
          <tbody>
            <tr class="r1"><td class="rh">1</td><td></td><td>0~1200</td><td>120</td><td>取墙厚</td><td>2C12</td><td>2C14</td><td>A6@150(2)</td><td>2</td></tr>
            <tr class="r2"><td class="rh">2</td><td></td><td>1200~1700</td><td>120</td><td>取墙厚</td><td>2C12</td><td>2C14</td><td>A6@150(2)</td><td>2</td></tr>
            <tr class="r3"><td class="rh">3</td><td class="edit"><i class="cursor"></i></td><td>1700~2200</td><td>120</td><td>取墙厚</td><td>2C12</td><td>2C14</td><td>A6@150(2)</td><td>2</td></tr>
          </tbody>
        </table>
      </div>
      <div class="btnrow">
        <button class="btn">查看说明</button>
        <span class="spring"></span>
        <button class="btn">添加行</button>
        <button class="btn">删除行</button>
      </div>
      <div class="sec sec3">生成方式</div>
      <div class="radios">
        <label class="chk"><i class="rb on"></i>选择图元</label>
        <label class="chk"><i class="rb"></i>选择楼层</label>
      </div>
      <div class="cover"><label class="chk cv"><i class="cb"></i>覆盖同位置过梁</label></div>
      <div class="dsep"></div>
      <div class="dfoot">
        <button class="btn ok">确定</button>
        <button class="btn cancel">取消</button>
      </div>
    </div>
  </section>

  <svg class="marks" viewBox="0 0 1630 859" aria-hidden="true">
    <path d="M100 589L1001 25 1003 20 1021 21 1013 43 1009 37z"/>
    <path d="M1016 26L885 358 880 363 883 382 897 368 892 362 1018 30z"/>
    <path d="M3 338L62 495 84 572 100 589 101 565 69 495z"/>
  </svg>
</div>
</body>
</html>
```
FILE: styles.css
```css
*{box-sizing:border-box}
html,body{margin:0;padding:0;height:100%;overflow:hidden}
body{font-family:"Noto Sans CJK SC","Liberation Sans",sans-serif;font-size:12px;color:#1e1e1e;background:#eee}
.sprite{position:absolute;width:0;height:0}
.app{position:relative;width:1630px;height:859px;display:flex;flex-direction:column;overflow:hidden}
.i{width:16px;height:16px;flex:none;display:block}
.caret{display:inline-block;width:0;height:0;border:3px solid transparent;border-top:4px solid #666;border-bottom:0;margin-left:7px;flex:none}
.it .caret{margin-left:5px}
.cadt{font:6px "Liberation Sans",sans-serif;fill:#3a6fb0}
.rt{font:8px "Liberation Sans",sans-serif;fill:#333}

.tabs{height:10px;flex:none;background:#fff;border-bottom:1px solid #ccc;display:flex;padding-left:49.5px;position:relative;overflow:hidden}
.logo{position:absolute;left:9px;top:-12px;width:29px;height:17px;border-radius:8px;background:#1479e0}
.tab{padding:0 12.5px;font-size:12.5px;line-height:0;color:#333}
.tab.active{background:#5aa0ea;color:#fff}
.quick{margin-left:auto;width:178px;height:7px;background:#fff;border:1px solid #bbb;border-top:0}

.ribbon{height:97px;flex:none;display:flex;background:linear-gradient(#fff 0%,#fff 55%,#e9ecec 100%);border-bottom:1px solid #8d8f92}
.group{display:flex;flex-direction:column;position:relative;padding-top:1.5px}
.group::after{content:"";position:absolute;right:0;top:2px;bottom:3px;width:1px;background:#d5d8da}
.g1{width:146px;padding-left:13px}
.g2{width:194px;padding-left:9px}
.g3{width:276px;padding-left:9px}
.g4{width:238px;padding-left:9px}
.g5{width:118px;padding-left:10px}
.g6{width:151px;padding-left:6px}
.cols{display:flex;height:69px}
.col{display:flex;flex-direction:column}
.c-g1{margin-left:11px}
.w80{width:80px}.w66{width:66px}.w112{width:112px}.w54{width:54px}.w53{width:53px}.w55{width:55px}
.it{height:23px;display:flex;align-items:center;gap:3px;white-space:nowrap}
.off{color:#b0b0b0}
.off .caret{border-top-color:#bbb}
.big{display:flex;flex-direction:column;align-items:center;padding-top:5px;position:relative}
.bigsel{width:30px}
.i-big{width:30px;height:30px;display:block;flex:none}
.big span{margin-top:3px;line-height:18px;white-space:nowrap}
.big .caret{margin:0}
.w42{width:42px;align-items:flex-start}.w42 span{margin-left:9px}
.w40{width:40px;align-items:flex-start}.w40 span{margin-left:3px}
.w52{width:52px}
.w52 .i-big{margin-left:6px}
.mini{display:flex;flex-direction:column;gap:7px;margin-top:2px}
.hi{background:#c7d9f2;height:19px;margin:4px 0 2px;padding:0 6px 0 4px;width:76px}
.glabel{height:20px;line-height:19px;display:flex;align-items:center;justify-content:center;margin-top:3px;padding-right:12px;white-space:nowrap}
.lb1{margin-left:-3px}
.nocaret{padding:2px 0 0;margin-left:-2px}
.g2 .glabel,.g3 .glabel{margin-left:1px}
.g4 .glabel{margin-left:-8px;padding-right:0}
.g5 .glabel{margin-left:0;padding-right:0;justify-content:flex-start;padding-left:29px}

.combos{height:28px;flex:none;background:#c8cbd0;border-bottom:1px solid #9a9c9f;display:flex;padding:3px 0 0 2px}
.combo{width:100px;height:22px;background:#fff;border-right:1px solid #c8cbd0;display:flex;align-items:center;justify-content:space-between;padding:0 5px 0 4px;font-size:12px}
.combo .caret{margin-left:auto}

.work{flex:1;display:flex;min-height:0;background:#eee}
.strip{height:11px;background:#d3d5d9;position:relative;flex:none}
.x{position:absolute;right:4px;top:-4px;color:#777;font-size:13px;line-height:16px;font-family:"Liberation Sans",sans-serif}
.nav{width:211px;margin-left:1px;display:flex;flex-direction:column;border-right:1px solid #c3c3c3;flex:none}
.navtitle{height:22px;line-height:21px;padding-left:8px;color:#8a8a8a;background:#eee;border-bottom:1px solid #c8c8c8;flex:none}
.navtools{height:28px;background:#eee;border-bottom:1px solid #c8c8c8;display:flex;align-items:center;gap:4px;padding:0 1px 0 8px;flex:none}
.pin{width:13px;height:10px;margin-right:auto}
.tbtn{width:24px;height:22px;border:1px solid #5ba5f0;border-radius:3px;background:#fff;display:flex;align-items:center;justify-content:center}
.tbtn svg{width:16px;height:14px}
.tree{flex:1;background:#fff;padding-top:2.5px;position:relative;overflow:hidden}
.thumb{position:absolute;left:198px;top:17px;width:8px;height:489px;background:#c8c8c8;border-radius:4px}
.n{height:24px;display:flex;align-items:center;gap:5px;padding-left:3px;white-space:nowrap}
.n.s{padding-left:44px}
.n.sel{position:relative;z-index:0}
.n.sel::before{content:"";position:absolute;left:40px;width:97px;top:2px;height:21px;background:#c7d8f0;z-index:-1}

.mid{width:289px;margin-left:4px;flex:none;display:flex;flex-direction:column;position:relative}
.pane{border:1px solid #bdbdbd;border-width:0 1px;display:flex;flex-direction:column}
.top{height:356px;border-bottom:1px solid #bdbdbd}
.bottom{flex:1;margin-top:4px}
.ptabs{height:24px;display:flex;flex:none;background:#eee;border-bottom:1px solid #c8c8c8}
.bottom .ptabs{height:22px}
.ptab{width:65px;text-align:center;line-height:23px;background:#d6d6d6;color:#999;border-right:1px solid #c4c4c4}
.ptab.on{background:#eee;color:#222;font-weight:500}
.ptools{height:27px;display:flex;align-items:center;background:#eee;border-bottom:1px solid #c8c8c8;position:relative;flex:none}
.pt{display:flex;align-items:center;gap:3px;white-space:nowrap}
.pt1{margin-left:5px;width:63px}.pt2{width:50px}.pt3{width:53px}
.pt1 .caret{margin-left:5px}
.more{position:absolute;right:2px;top:6px;font-size:9px;letter-spacing:-2px;color:#333;font-family:"DejaVu Sans",sans-serif}
.search{height:20px;background:#fff;border-bottom:1px solid #c8c8c8;color:#8a8a8a;padding-left:2px;line-height:19px;position:relative;flex:none}
.sico{position:absolute;right:8px;top:4px;width:12px;height:12px}
.plist{flex:1;background:#fff;padding:4px 0 0 20px}
.pitem{display:block;width:31px;height:21px;background:#b0cbee;line-height:21px;text-align:center}
.pgrid{flex:1;background:#fff;position:relative;display:flex;flex-direction:column;background-image:linear-gradient(90deg,#eee 22px,transparent 22px)}
.pg-h,.pg-r{display:flex;width:283px}
.pg-h{height:22px;background:#eee;border-bottom:1px solid #d0d0d0}
.pg-r{height:22px;border-bottom:1px solid #d8d8d8}
.pg-h span,.pg-r span{text-align:center;line-height:21px;border-right:1px solid #d0d0d0;color:#444}
.c0{width:22px;flex:none}.c1{width:101px;flex:none}.c2{width:119px;flex:none}.c3{width:41px;flex:none}
.pg-r .c0{background:#eee;font-size:12px}
.pg-r .c2{background:#e9e9e9}
.pg-r .c1,.pg-r .c3{background:#fff}
.splitter{position:absolute;right:-4px;top:372px;width:4px;height:101px;background:#4b5159;z-index:1}

.canvas{flex:1;background:#000;position:relative;overflow:hidden}
.cad{display:block;width:1125px;height:724px}
.cad path{fill:none}
.rd{stroke:#4d1515;stroke-width:1}
.rdash{stroke:#c81414;stroke-width:1;stroke-dasharray:10 28}
.gd{stroke:#117a11;stroke-width:1}
.bg{stroke:#19c719;stroke-width:1}
.gw{stroke:#7a7a7a;stroke-width:1.200}
.bar{stroke:#606060;stroke-width:3;stroke-linecap:round}
.gwthick{stroke:#8b8b8b;stroke-width:4}
.gwthin{stroke:#8b8b8b;stroke-width:2}
.cy{stroke:#18a8d8;stroke-width:1.200}
.cyt{stroke:#3c8fc4;stroke-width:3}
.cad .arc{stroke:#14d0e0;stroke-width:1.200}
.cad .pu{stroke:#9a00f0;stroke-width:4.500}
.cad .pul{stroke:#d8b8e4;stroke-width:1.800}
.cad .ye{stroke:#e8e400;stroke-width:1.200}
.cad .re{stroke:#e01010;stroke-width:1.200}
.cad .re2{stroke:#a80e0e;stroke-width:2;stroke-dasharray:46 6 14 6}
.pf{fill:none;stroke:#d01010}
.cad .be{stroke:#4a66b8;stroke-width:1.200}
.cad .lg{stroke:#19c719;stroke-width:1.200}
.cad .lgd{stroke:#117a11}
.cad .ar{fill:#19c719}
.cad .wl{stroke:#0f8a0f}
.tl text{font:17px "Liberation Sans",sans-serif;fill:#f0f0f0;font-weight:400}
.tv text{font:20px "Liberation Sans",sans-serif;fill:#eaeaea;text-anchor:middle}
.ts text{font:9px "Liberation Sans",sans-serif;fill:#d8d8d8;text-anchor:start}
.ts text[transform]{text-anchor:middle}
.tb text{font:7px "Noto Sans CJK SC",sans-serif;fill:#6a84d8}
.tm text{font:16px "Liberation Sans",sans-serif;fill:#e8e8e8}
.fire{font:19px "Noto Sans CJK SC",sans-serif;fill:#e8e400}
.firen{font:27px "Liberation Sans",sans-serif;fill:#d8d400;font-weight:400}

.rail{position:absolute;right:0;top:0;width:27px;height:227px;background:#a7a8aa;display:flex;flex-direction:column;align-items:flex-start;padding:12px 0 0 4px}
.ri{width:24px;height:24px;display:block;flex:none;margin-bottom:5px}
.rc{margin:0 0 6px 7px;border-top-color:#555}
.rsep{height:1px;width:24px;background:#777;margin:3px 0 5px}

.dialog{position:absolute;left:610px;top:255px;width:685px;height:452px;background:#eee;box-shadow:0 0 0 1px #cdd6df;display:flex;flex-direction:column}
.dtitle{height:27px;background:#2e80e0;color:#fff;display:flex;align-items:center;justify-content:space-between;padding:0 8px;flex:none}
.dclose{font-size:18px;font-weight:400;line-height:1;font-family:"Liberation Sans",sans-serif}
.dbody{padding:21px 21px 0;flex:1;display:flex;flex-direction:column}
.sec{height:16px;line-height:16px;font-weight:500;display:flex;align-items:center;gap:6px;white-space:nowrap;color:#111;flex:none}
.sec::after{content:"";flex:1;height:1px;background:#c6c6c6}
.sec2{margin-top:8px;gap:9px}
.sec3{margin-top:7px}
.checks{display:grid;grid-template-columns:56px 57px 79px 69px 68px 68px 79px auto;padding-left:12px;margin-top:6px;height:16px;flex:none}
.chk{display:flex;align-items:center;gap:4px;white-space:nowrap;height:16px}
.cb{width:14px;height:14px;border:1px solid #8e8e8e;border-radius:3px;background:#fff;display:block;flex:none;position:relative}
.cb.on{background:#66a8f5;border-color:#66a8f5}
.cb.on::after{content:"";position:absolute;left:3.500px;top:1.500px;width:4px;height:7px;border:solid #fff;border-width:0 1.500px 1.500px 0;transform:rotate(40deg)}
.rb{width:14px;height:14px;border:1px solid #8e8e8e;border-radius:50%;background:#fff;display:block;flex:none;position:relative}
.rb.on::after{content:"";position:absolute;left:3px;top:3px;width:6px;height:6px;border-radius:50%;background:#5ba5f5}
.gridbox{height:170px;margin:6px -9px 0 0;background:#fff;border:1px solid #c8c8c8;border-right:0;flex:none}
.gridt{border-collapse:collapse;table-layout:fixed;width:617px}
.k0{width:7px}.k1{width:87px}.k2{width:107px}.k3{width:61px}.k4{width:71px}.k5{width:106px}.k6{width:46px}
.gridt th{height:20px;background:#7db8f5;color:#fff;font-weight:500;padding:0;border-right:1px solid #a9cff5;line-height:19px}
.gridt th.corner{background:#eee}
.gridt td{padding:0;text-align:center;border:1px solid #d8d8d8;border-top:0;height:22px;line-height:20px;background:#fff;color:#222}
.r1 td{height:21px}
.r2 td{background:#e8e6e3}
.r3 td{background:#d2e6fa;border-top:2px solid #5b9ddf;border-bottom:2px solid #5b9ddf;border-left-color:#d8d8d8}
.r3 td:last-child{border-right:2px solid #5b9ddf}
.gridt td.rh{background:#eee;border:0;text-align:left;font-size:11px;overflow:hidden;color:#333}
.r3 td.rh{background:#7db8f5;color:#fff;border-top:2px solid #5b9ddf;border-bottom:2px solid #5b9ddf}
.r3 td.edit{background:#fff;text-align:left;padding-left:4px}
.cursor{display:block;width:1px;height:15px;background:#000}
.btn{font:12px "Noto Sans CJK SC","Liberation Sans",sans-serif;height:25px;width:79px;background:#fff;border:1px solid #d2d2d2;border-radius:3px;color:#222;padding:0}
.btnrow{display:flex;gap:7px;margin-top:7px;height:25px;flex:none}
.btnrow .btn:first-child{width:59px}
.spring{flex:1}
.radios{display:grid;grid-template-columns:175px auto;padding-left:12px;margin-top:7px;flex:none}
.cover{padding-left:12px;margin-top:7px;flex:none}
.cv{gap:3px}
.dsep{height:1px;background:#c6c6c6;margin:19px -9px 0;flex:none}
.dfoot{display:flex;justify-content:flex-end;gap:6px;margin:9px -9px 0 0;flex:none}
.dfoot .btn{width:80px;height:26px}
.ok{background:#2e80e0;border-color:#2e80e0;color:#fff}

.marks{position:absolute;left:0;top:0;width:1630px;height:859px;pointer-events:none}
.marks path{fill:#f8260e}
```
